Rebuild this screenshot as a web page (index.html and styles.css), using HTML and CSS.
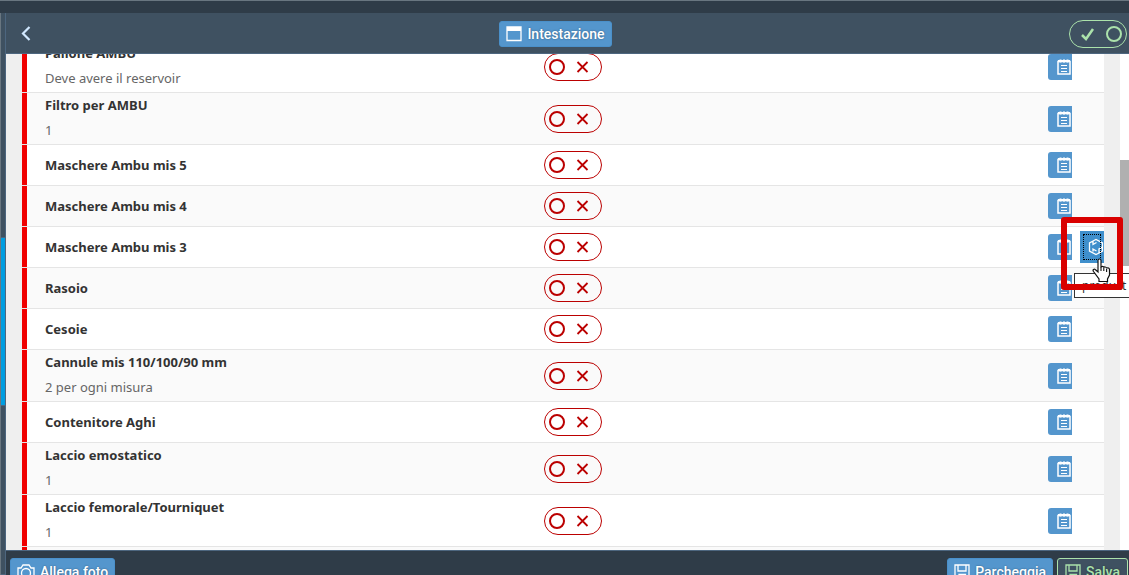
FILE: index.html
```
<!DOCTYPE html>
<html lang="it">
<head>
    <meta charset="UTF-8">
    <meta name="viewport" content="width=device-width, initial-scale=1.0">
    <title>Checklist</title>
    <link rel="stylesheet" href="styles.css">
</head>
<body>
    <!-- Shared icons -->
    <svg class="sprite" aria-hidden="true">
        <symbol id="icon-note" viewBox="0 0 14 16">
            <path d="M1 2.500h12v12.500H1z" fill="none" stroke="currentColor" stroke-width="1.500"/>
            <path d="M1 2h12M3.500 0.500v3M7 0.500v3M10.500 0.500v3" stroke="currentColor" stroke-width="2"/>
            <path d="M4 6.500h6M4 9.500h6M4 12.500h6" stroke="currentColor" stroke-width="1.200"/>
        </symbol>
        <symbol id="icon-save" viewBox="0 0 16 16">
            <path d="M1 1h14v14H3.500L1 12.500zM4 1v6h8V1M5 15v-4.500h6.500V15M7.500 12v3" fill="none" stroke="currentColor" stroke-width="1.300"/>
        </symbol>
    </svg>

    <div class="app">
        <div class="top-strip"></div>
        <div class="workspace">
            <aside class="side-strip">
                <div class="side-item"></div>
                <div class="side-item active"></div>
                <div class="side-item"></div>
            </aside>
            <main class="page">
                <header class="page-header">
                    <button class="back" type="button" aria-label="Indietro">
                        <svg width="10" height="15" viewBox="0 0 10 15"><path d="M8.500 1L2 7.500L8.500 14" fill="none" stroke="currentColor" stroke-width="2.200"/></svg>
                    </button>
                    <button class="btn" type="button">
                        <svg width="16" height="16" viewBox="0 0 16 16"><path d="M1 1h14v13.500H1z" fill="none" stroke="currentColor" stroke-width="1.300"/><path d="M1 1h14v4H1z" fill="currentColor"/></svg>
                        Intestazione
                    </button>
                    <label class="switch switch-on">
                        <input type="checkbox" checked aria-label="Tutti">
                        <svg width="58" height="28" viewBox="0 0 58 28"><path d="M13 15l4 4l7-10" fill="none" stroke="currentColor" stroke-width="2.500"/><circle cx="45" cy="14" r="7" fill="none" stroke="currentColor" stroke-width="2"/></svg>
                    </label>
                </header>

                <section class="scroller">
                    <ul class="list">
                        <li class="row">
                            <div class="text"><div class="name">Pallone AMBU</div><div class="description">Deve avere il reservoir</div></div>
                            <label class="switch"><input type="checkbox" aria-label="Pallone AMBU"><svg width="58" height="28" viewBox="0 0 58 28"><circle cx="13" cy="14" r="7" fill="none" stroke="currentColor" stroke-width="2"/><path d="M33.500 9l10 10M43.500 9l-10 10" stroke="currentColor" stroke-width="1.800"/></svg></label>
                            <button class="note" type="button" aria-label="Nota"><svg width="14" height="16"><use href="#icon-note"/></svg></button>
                        </li>
                        <li class="row">
                            <div class="text"><div class="name">Filtro per AMBU</div><div class="description">1</div></div>
                            <label class="switch"><input type="checkbox" aria-label="Filtro per AMBU"><svg width="58" height="28" viewBox="0 0 58 28"><circle cx="13" cy="14" r="7" fill="none" stroke="currentColor" stroke-width="2"/><path d="M33.500 9l10 10M43.500 9l-10 10" stroke="currentColor" stroke-width="1.800"/></svg></label>
                            <button class="note" type="button" aria-label="Nota"><svg width="14" height="16"><use href="#icon-note"/></svg></button>
                        </li>
                        <li class="row">
                            <div class="text"><div class="name">Maschere Ambu mis 5</div></div>
                            <label class="switch"><input type="checkbox" aria-label="Maschere Ambu mis 5"><svg width="58" height="28" viewBox="0 0 58 28"><circle cx="13" cy="14" r="7" fill="none" stroke="currentColor" stroke-width="2"/><path d="M33.500 9l10 10M43.500 9l-10 10" stroke="currentColor" stroke-width="1.800"/></svg></label>
                            <button class="note" type="button" aria-label="Nota"><svg width="14" height="16"><use href="#icon-note"/></svg></button>
                        </li>
                        <li class="row">
                            <div class="text"><div class="name">Maschere Ambu mis 4</div></div>
                            <label class="switch"><input type="checkbox" aria-label="Maschere Ambu mis 4"><svg width="58" height="28" viewBox="0 0 58 28"><circle cx="13" cy="14" r="7" fill="none" stroke="currentColor" stroke-width="2"/><path d="M33.500 9l10 10M43.500 9l-10 10" stroke="currentColor" stroke-width="1.800"/></svg></label>
                            <button class="note" type="button" aria-label="Nota"><svg width="14" height="16"><use href="#icon-note"/></svg></button>
                        </li>
                        <li class="row">
                            <div class="text"><div class="name">Maschere Ambu mis 3</div></div>
                            <label class="switch"><input type="checkbox" aria-label="Maschere Ambu mis 3"><svg width="58" height="28" viewBox="0 0 58 28"><circle cx="13" cy="14" r="7" fill="none" stroke="currentColor" stroke-width="2"/><path d="M33.500 9l10 10M43.500 9l-10 10" stroke="currentColor" stroke-width="1.800"/></svg></label>
                            <button class="note" type="button" aria-label="Nota"><svg width="14" height="16"><use href="#icon-note"/></svg></button>
                            <div class="product-cell">
                                <button class="product" type="button" aria-label="product">
                                    <svg width="16" height="18" viewBox="0 0 16 18"><path d="M5 3L8 1.500L14.500 5v8L11 15M11 15L8 16.500L1.500 13V5L5 3M5 3v3.500L8.500 4.500M14.500 9L11 11v4M5 13.500V11l3.500 2" fill="none" stroke="currentColor" stroke-width="1.300"/></svg>
                                </button>
                                <div class="tooltip" role="tooltip">product</div>
                                <div class="highlight"></div>
                                <svg class="cursor" width="19" height="25" viewBox="0 0 19 25"><path d="M6 2.500c0-2 3-2 3 0v7c0-1.500 2.800-1.500 2.800.3c0-1.200 2.800-1.200 2.800.7c0-1 2.900-1 2.900 1v5.500l-2 4v2.500H7v-2.500L1.500 13.500c-1.300-2 .8-3 2-1.800L6 14z" fill="#fff" stroke="#111" stroke-width="1.200"/><path d="M9 9v4M11.800 10v3M14.600 11v3" stroke="#111" stroke-width="1.100"/></svg>
                            </div>
                        </li>
                        <li class="row">
                            <div class="text"><div class="name">Rasoio</div></div>
                            <label class="switch"><input type="checkbox" aria-label="Rasoio"><svg width="58" height="28" viewBox="0 0 58 28"><circle cx="13" cy="14" r="7" fill="none" stroke="currentColor" stroke-width="2"/><path d="M33.500 9l10 10M43.500 9l-10 10" stroke="currentColor" stroke-width="1.800"/></svg></label>
                            <button class="note" type="button" aria-label="Nota"><svg width="14" height="16"><use href="#icon-note"/></svg></button>
                        </li>
                        <li class="row">
                            <div class="text"><div class="name">Cesoie</div></div>
                            <label class="switch"><input type="checkbox" aria-label="Cesoie"><svg width="58" height="28" viewBox="0 0 58 28"><circle cx="13" cy="14" r="7" fill="none" stroke="currentColor" stroke-width="2"/><path d="M33.500 9l10 10M43.500 9l-10 10" stroke="currentColor" stroke-width="1.800"/></svg></label>
                            <button class="note" type="button" aria-label="Nota"><svg width="14" height="16"><use href="#icon-note"/></svg></button>
                        </li>
                        <li class="row">
                            <div class="text"><div class="name">Cannule mis 110/100/90 mm</div><div class="description">2 per ogni misura</div></div>
                            <label class="switch"><input type="checkbox" aria-label="Cannule mis 110/100/90 mm"><svg width="58" height="28" viewBox="0 0 58 28"><circle cx="13" cy="14" r="7" fill="none" stroke="currentColor" stroke-width="2"/><path d="M33.500 9l10 10M43.500 9l-10 10" stroke="currentColor" stroke-width="1.800"/></svg></label>
                            <button class="note" type="button" aria-label="Nota"><svg width="14" height="16"><use href="#icon-note"/></svg></button>
                        </li>
                        <li class="row">
                            <div class="text"><div class="name">Contenitore Aghi</div></div>
                            <label class="switch"><input type="checkbox" aria-label="Contenitore Aghi"><svg width="58" height="28" viewBox="0 0 58 28"><circle cx="13" cy="14" r="7" fill="none" stroke="currentColor" stroke-width="2"/><path d="M33.500 9l10 10M43.500 9l-10 10" stroke="currentColor" stroke-width="1.800"/></svg></label>
                            <button class="note" type="button" aria-label="Nota"><svg width="14" height="16"><use href="#icon-note"/></svg></button>
                        </li>
                        <li class="row">
                            <div class="text"><div class="name">Laccio emostatico</div><div class="description">1</div></div>
                            <label class="switch"><input type="checkbox" aria-label="Laccio emostatico"><svg width="58" height="28" viewBox="0 0 58 28"><circle cx="13" cy="14" r="7" fill="none" stroke="currentColor" stroke-width="2"/><path d="M33.500 9l10 10M43.500 9l-10 10" stroke="currentColor" stroke-width="1.800"/></svg></label>
                            <button class="note" type="button" aria-label="Nota"><svg width="14" height="16"><use href="#icon-note"/></svg></button>
                        </li>
                        <li class="row">
                            <div class="text"><div class="name">Laccio femorale/Tourniquet</div><div class="description">1</div></div>
                            <label class="switch"><input type="checkbox" aria-label="Laccio femorale/Tourniquet"><svg width="58" height="28" viewBox="0 0 58 28"><circle cx="13" cy="14" r="7" fill="none" stroke="currentColor" stroke-width="2"/><path d="M33.500 9l10 10M43.500 9l-10 10" stroke="currentColor" stroke-width="1.800"/></svg></label>
                            <button class="note" type="button" aria-label="Nota"><svg width="14" height="16"><use href="#icon-note"/></svg></button>
                        </li>
                        <li class="row"></li>
                    </ul>
                    <div class="scrollbar"><div class="thumb"></div></div>
                </section>

                <footer class="page-footer">
                    <button class="btn" type="button">
                        <svg width="18" height="16" viewBox="0 0 18 16"><path d="M1 4h3l2-3h6l2 3h3v11H1z" fill="none" stroke="currentColor" stroke-width="1.300"/><circle cx="9" cy="9" r="4.500" fill="none" stroke="currentColor" stroke-width="1.300"/></svg>
                        Allega foto
                    </button>
                    <span class="spacer"></span>
                    <button class="btn" type="button">
                        <svg width="16" height="16"><use href="#icon-save"/></svg>
                        Parcheggia
                    </button>
                    <button class="btn btn-accept" type="button">
                        <svg width="16" height="16"><use href="#icon-save"/></svg>
                        Salva
                    </button>
                </footer>
            </main>
        </div>
    </div>
</body>
</html>
```
FILE: styles.css
```
* {
    box-sizing: border-box;
}
body {
    margin: 0;
    font-family: "Noto Sans", sans-serif;
    font-size: 13px;
    color: #333;
    overflow: hidden;
}
.sprite {
    display: none;
}
svg {
    display: block;
    flex-shrink: 0;
}
.app {
    display: flex;
    flex-direction: column;
    height: 100vh;
    background-color: #2f3c48;
}
.top-strip {
    height: 13px;
    flex-shrink: 0;
    border-top: 1px solid #697680;
}
.workspace {
    display: flex;
    flex: 1;
    min-height: 0;
}
.side-strip {
    display: flex;
    flex-direction: column;
    width: 6px;
    background-color: #3f5161;
    border-left: 1px solid #697680;
    border-right: 1px solid #4d667f;
}
.side-item {
    flex: 4 1 0;
    border-bottom: 1px solid #4d667f;
}
.side-item.active {
    flex: 3 1 0;
    background-color: #009de0;
}
.side-item:last-child {
    flex: 3 1 0;
}
.page {
    display: flex;
    flex-direction: column;
    flex: 1;
    min-width: 0;
}
.page-header {
    display: flex;
    justify-content: space-between;
    align-items: center;
    height: 41px;
    flex-shrink: 0;
    padding: 1px 2px 0 14px;
    background-color: #3f5161;
    border-bottom: 1px solid #4d667f;
}
.back {
    width: 22px;
    padding: 0 0 0 1px;
    border: 0;
    background: none;
    color: #d1e8ff;
}
.btn {
    display: flex;
    align-items: center;
    gap: 5px;
    height: 26px;
    padding: 1px 6px 0;
    border: 1px solid #4a90ca;
    border-radius: 3px;
    background-color: #5496cd;
    color: #fff;
    font: 500 14px Roboto, sans-serif;
    text-shadow: 0 0 2px rgba(0,0,0,0.4);
}
.btn-accept {
    padding: 1px 7px 0;
    border-color: #abe2ab;
    background-color: #3f5161;
    color: #abe2ab;
}
.switch {
    position: relative;
    display: block;
    width: 58px;
    height: 28px;
    color: #b00;
}
.switch input {
    position: absolute;
    appearance: none;
    width: 100%;
    height: 100%;
    margin: 0;
    border: 1px solid #b00;
    border-radius: 14px;
}
.switch-on {
    color: #abe2ab;
}
.switch-on input {
    border-color: #abe2ab;
}
.scroller {
    display: flex;
    flex: 1;
    min-height: 0;
    overflow: hidden;
    padding-left: 16px;
    background-color: #efefef;
}
/* list is scrolled part way through the first row */
.list {
    flex: 1;
    margin: -13px 16px 0 0;
    padding: 0;
    list-style: none;
}
.row {
    display: grid;
    grid-template-columns: calc(50% - 27px) 1fr 24px 24px;
    column-gap: 8px;
    align-items: center;
    min-height: 41px;
    border-bottom: 1px solid #e5e5e5;
    background: linear-gradient(to right, #f00000 5px, #fff 5px);
}
.row:nth-child(even) {
    background: linear-gradient(to right, #f00000 5px, #fafafa 5px);
}
.text {
    padding-left: 23px;
}
.name {
    font-weight: 700;
    line-height: 25px;
}
.description {
    margin-bottom: 2px;
    color: #666;
    line-height: 24px;
}
.note, .product {
    display: flex;
    align-items: center;
    justify-content: flex-end;
    width: 24px;
    height: 26px;
    padding: 0 1px 0 0;
    border: 0;
    border-radius: 3px 0 0 3px;
    background-color: #5496cd;
    color: #fff;
}
.product-cell {
    position: relative;
}
.product {
    height: 32px;
    padding: 0;
    border-radius: 0;
    background-color: #3f8fcc;
    outline: 1px dotted #000;
    outline-offset: -4px;
}
.tooltip {
    position: absolute;
    top: 42px;
    left: -6px;
    z-index: 2;
    width: 55px;
    height: 25px;
    padding-left: 7px;
    border: 1px solid #333;
    border-right: 0;
    background-color: #fff;
    font-size: 12px;
    line-height: 23px;
}
.highlight {
    position: absolute;
    top: -14px;
    left: -19px;
    z-index: 3;
    width: 62px;
    height: 73px;
    border: 6px solid #d90000;
    border-radius: 3px;
}
.cursor {
    position: absolute;
    top: 27px;
    left: 12px;
    z-index: 4;
}
.scrollbar {
    width: 9px;
    padding-top: 106px;
    background-color: #fff;
}
.thumb {
    height: 106px;
    background-color: #b0b0b0;
}
.page-footer {
    display: flex;
    gap: 4px;
    height: 25px;
    flex-shrink: 0;
    padding: 7px 1px 0 4px;
    overflow: hidden;
    border-top: 1px solid #4d667f;
}
.spacer {
    flex: 1;
}
```
